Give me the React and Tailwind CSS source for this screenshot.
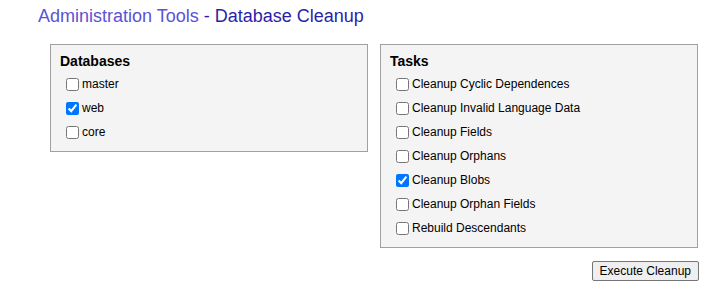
import { useState } from 'react'

const DATABASES = ['master', 'web', 'core']
const TASKS = [
  'Cleanup Cyclic Dependences',
  'Cleanup Invalid Language Data',
  'Cleanup Fields',
  'Cleanup Orphans',
  'Cleanup Blobs',
  'Cleanup Orphan Fields',
  'Rebuild Descendants',
]

function Panel({ title, items, checked, onToggle }) {
  return (
    <div className="border border-[#a0a0a0] bg-[#f4f4f4] pt-[8px] pb-[7px] pl-[9px]">
      <div className="text-[14px] leading-[16px] font-bold text-black">{title}</div>
      <div className="mt-[3px]">
        {items.map(name => (
          <label key={name} className="flex items-center h-[24px] pl-[6px] text-[12px] text-black cursor-default">
            <input
              type="checkbox"
              checked={checked.includes(name)}
              onChange={() => onToggle(name)}
              className="m-0 mr-[3px] w-[13px] h-[13px]"
            />
            <span>{name}</span>
          </label>
        ))}
      </div>
    </div>
  )
}

export default function App() {
  const [dbs, setDbs] = useState(['web'])
  const [tasks, setTasks] = useState(['Cleanup Blobs'])

  const toggle = setter => name =>
    setter(prev => prev.includes(name) ? prev.filter(n => n !== name) : [...prev, name])

  return (
    <div className="w-[718px] h-[286px] bg-white" style={{ fontFamily: '"Liberation Sans", Arial, sans-serif' }}>
      <h1 className="pt-[6px] pl-[38px] text-[18px] leading-[20px] font-normal">
        <span className="text-[#5b52d6]">Administration Tools</span>
        <span className="text-[#2b1faa]"> - Database Cleanup</span>
      </h1>
      <div className="mt-[18px] ml-[50px] w-[648px] grid grid-cols-2 gap-[12px] items-start">
        <Panel title="Databases" items={DATABASES} checked={dbs} onToggle={toggle(setDbs)} />
        <div>
          <Panel title="Tasks" items={TASKS} checked={tasks} onToggle={toggle(setTasks)} />
          <div className="flex justify-end mt-[13px] -mr-[1px]">
            <button className="h-[20px] px-[7px] border border-[#767676] rounded-[2px] bg-[#efefef] text-[12px] text-black leading-none hover:bg-[#e5e5e5]">
              Execute Cleanup
            </button>
          </div>
        </div>
      </div>
    </div>
  )
}
